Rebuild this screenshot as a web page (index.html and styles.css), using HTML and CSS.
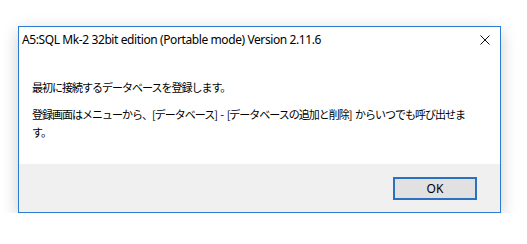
FILE: index.html
```html
<!DOCTYPE html>
<html lang="ja">
<head>
    <meta charset="UTF-8">
    <meta name="viewport" content="width=device-width, initial-scale=1.0">
    <title>A5:SQL Mk-2</title>
    <link rel="stylesheet" href="styles.css">
</head>
<body>
  <div class="dialog">
    <div class="title-bar">
      <span class="title">A5:SQL Mk-2 32bit edition (Portable mode) Version 2.11.6</span>
      <button class="close-btn" aria-label="閉じる">
        <svg width="10" height="10" viewBox="0 0 10 10">
          <path d="M0.5 0.5 L9.5 9.5 M9.5 0.5 L0.5 9.5" stroke="#111" stroke-width="1" fill="none"/>
        </svg>
      </button>
    </div>

    <div class="message">
      <p>最初に接続するデータベースを登録します。</p>
      <p>登録画面はメニューから、[データベース] - [データベースの追加と削除] からいつでも呼び出せま<br>す。</p>
    </div>

    <div class="footer">
      <button class="ok-btn">OK</button>
    </div>
  </div>
</body>
</html>
```

FILE: styles.css
```css
/* 背景 */
html, body {
  margin: 0;
  padding: 0;
  background: #ffffff;
}

body {
  padding: 26px 0 0 18px;
  font-family: "Noto Sans", "Noto Sans CJK JP", sans-serif;
  font-size: 12px;
  color: #000000;
}

/* ダイアログ本体 */
.dialog {
  width: 481px;
  border: 1px solid #2b7bd0;
  background: #ffffff;
  box-shadow: 0 5px 16px rgba(0,0,0,0.2);
}

.title-bar {
  height: 25px;
  display: flex;
  align-items: center;
  justify-content: space-between;
  padding: 0 0 0 3px;
}

.title {
  font-size: 12px;
  letter-spacing: -0.4px;
  line-height: 25px;
}

.close-btn {
  width: 30px;
  height: 25px;
  border: none;
  background: transparent;
  display: flex;
  align-items: center;
  justify-content: center;
  padding: 0;
}

/* メッセージ */
.message {
  padding: 26px 13px 23px 13px;
  font-family: "Noto Sans CJK JP", sans-serif;
  font-size: 11px;
  letter-spacing: -1px;
  word-spacing: 2px;
}

.message p {
  margin: 0;
  line-height: 18px;
}

.message p + p {
  margin-top: 9px;
}

/* ボタン領域 */
.footer {
  background: #f0f0f0;
  display: flex;
  justify-content: flex-end;
  padding: 13px 23px 12px 0;
}

.ok-btn {
  width: 84px;
  height: 23px;
  border: 2px solid #2a72c0;
  background: #e1e1e1;
  font-family: "Noto Sans", sans-serif;
  font-size: 12px;
  color: #000000;
  padding: 0;
}
```
